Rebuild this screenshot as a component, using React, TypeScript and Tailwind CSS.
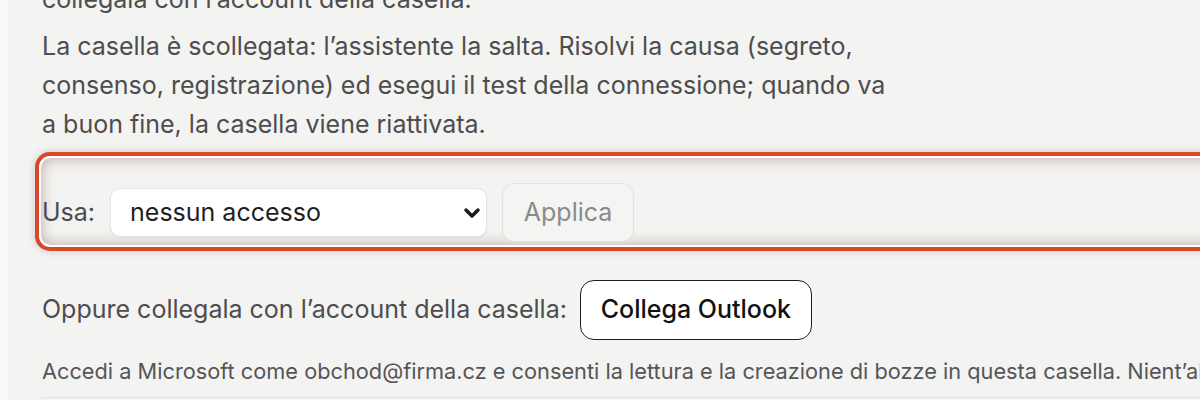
import { ChevronDown } from 'lucide-react'

export default function App() {
  return (
    <div className="flex h-[400px] w-[1200px] overflow-hidden bg-[#fafaf9] font-['Inter',sans-serif]">
      <div className="ml-2 flex-1 bg-[#f3f3f1] pl-[34px]">
        <div className="-mt-[20px] w-[1400px]">
          <p className="max-w-[860px] text-[25px] leading-[39px] text-[#4d4d4f]">
            collegala con l’account della casella.
          </p>
          <p className="mt-[8px] max-w-[860px] text-[25px] leading-[39px] text-[#4d4d4f]">
            La casella è scollegata: l’assistente la salta. Risolvi la causa (segreto,
            consenso, registrazione) ed esegui il test della connessione; quando va
            a buon fine, la casella viene riattivata.
          </p>

          <div className="-ml-[7px] mt-[8px] rounded-[15px] border-[4px] border-[#d9472f] bg-white p-[2px] shadow-[0_0_8px_rgba(0,0,0,0.18)]">
            <div className="flex items-center gap-[15px] rounded-[10px] bg-[#f3f3f1] pb-[3px] pl-[1px] pt-[25px] shadow-[inset_0_0_14px_rgba(120,80,70,0.45)]">
              <span className="text-[25px] text-[#4d4d4f]">Usa:</span>
              <div className="relative">
                <select
                  defaultValue="none"
                  className="h-[49px] w-[377px] appearance-none rounded-[10px] border border-[#e4e4e2] bg-white pl-[19px] text-[25px] text-[#1f1f1f] shadow-[0_1px_2px_rgba(0,0,0,0.06)] outline-none"
                >
                  <option value="none">nessun accesso</option>
                </select>
                <ChevronDown
                  className="pointer-events-none absolute right-[3px] top-1/2 h-[24px] w-[24px] -translate-y-1/2 text-[#1a1a1a]"
                  strokeWidth={3.5}
                />
              </div>
              <button
                disabled
                className="h-[59px] w-[132px] rounded-[12px] border border-[#e2e2e0] bg-[#f4f4f2] text-[25px] text-[#8a8a8a]"
              >
                Applica
              </button>
            </div>
          </div>

          <div className="mt-[29px] flex items-center gap-[13px]">
            <span className="text-[25px] text-[#4d4d4f]">Oppure collegala con l’account della casella:</span>
            <button className="h-[60px] w-[232px] rounded-[14px] border-[1.5px] border-[#1e1e1e] bg-white text-[25px] font-medium text-[#111]">
              Collega Outlook
            </button>
          </div>

          <p className="mt-[16px] whitespace-nowrap text-[21.75px] leading-[30px] text-[#555558]">
            Accedi a Microsoft come obchod@firma.cz e consenti la lettura e la creazione di bozze in questa casella. Nient’altro viene toccato.
          </p>
          <div className="mt-[11px] border-t border-[#e2e2e0]" />
        </div>
      </div>
    </div>
  )
}
